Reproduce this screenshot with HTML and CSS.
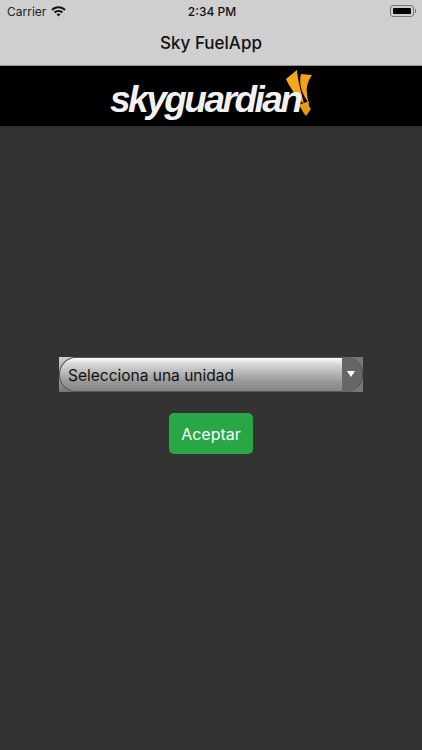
FILE: index.html
```html
<!DOCTYPE html>
<html lang="es">
<head>
    <meta charset="UTF-8">
    <meta name="viewport" content="width=device-width, initial-scale=1.0">
    <title>Sky FuelApp</title>
    <link rel="stylesheet" href="styles.css">
</head>
<body>

<div class="app">
    <div class="topbar">
        <div class="status-bar">
            <div class="status-left">
                <span>Carrier</span>
                <svg class="wifi" width="15" height="11" viewBox="0 0 15 11">
                    <path d="M7.5 0.3C4.7 0.3 2.2 1.4 0.3 3.2L1.7 4.7C3.2 3.2 5.2 2.3 7.5 2.3S11.8 3.2 13.3 4.7L14.7 3.2C12.8 1.4 10.3 0.3 7.5 0.3Z" fill="#111"/>
                    <path d="M7.5 3.9C5.7 3.9 4.1 4.6 2.9 5.8L4.3 7.2C5.1 6.4 6.2 5.9 7.5 5.9S9.9 6.4 10.7 7.2L12.1 5.8C10.9 4.6 9.3 3.9 7.5 3.9Z" fill="#111"/>
                    <path d="M7.5 7.4C6.7 7.4 6 7.7 5.5 8.2L7.5 10.6L9.5 8.2C9 7.7 8.3 7.4 7.5 7.4Z" fill="#111"/>
                </svg>
            </div>
            <div class="status-time">2:34 PM</div>
            <div class="status-right">
                <div class="battery"><div class="battery-level"></div></div>
                <div class="battery-tip"></div>
            </div>
        </div>
        <div class="nav-title">Sky FuelApp</div>
    </div>

    <div class="brand">
        <div class="logo">
            <svg class="logo-wings" width="30" height="50" viewBox="0 0 30 50">
                <path d="M12 1L1 10C4 17 11 27 19 35C17 25 13 14 12 1Z" fill="#f5a81c"/>
                <path d="M16 5L27 6C23 12 21 18 22 24C22 28 23 31 24 34C18 27 13 15 16 5Z" fill="#f0a31a"/>
                <path d="M14 36L24 32C23 36 25 39 26 40L21 47C18 44 17 40 14 36Z" fill="#e89a14"/>
            </svg>
            <span class="logo-text">skyguardian</span>
        </div>
    </div>

    <div class="content">
        <div class="unit-select">
            <div class="unit-pill">
                <span class="unit-label">Selecciona una unidad</span>
            </div>
            <div class="unit-arrow">
                <div class="arrow-cap"><span class="arrow-down"></span></div>
            </div>
        </div>
        <button class="btn-accept" type="button">Aceptar</button>
    </div>
</div>

</body>
</html>
```

FILE: styles.css
```css
body {
    margin: 0;
    padding: 0;
    font-family: 'Inter', 'Roboto', sans-serif;
    background-color: #333;
}
.app {
    width: 422px;
    height: 750px;
    display: flex;
    flex-direction: column;
    overflow: hidden;
}
.topbar {
    height: 65px;
    background-color: #cfcfcf;
    border-bottom: 1px solid #8f8f8f;
}
.status-bar {
    height: 22px;
    padding: 0 6px 0 7px;
    display: flex;
    align-items: center;
    justify-content: space-between;
    font-size: 12px;
    color: #222;
}
.status-left {
    width: 120px;
    display: flex;
    align-items: center;
    gap: 6px;
}
.wifi {
    margin-left: -1px;
}
.status-time {
    font-weight: 500;
    font-size: 12px;
    color: #111;
    padding-left: 1px;
}
.status-right {
    width: 120px;
    display: flex;
    align-items: center;
    justify-content: flex-end;
}
.battery {
    width: 24px;
    height: 12px;
    box-sizing: border-box;
    padding: 2px;
    border: 1px solid #777;
    border-radius: 3px;
}
.battery-level {
    height: 100%;
    background-color: #000;
    border-radius: 1px;
}
.battery-tip {
    width: 1px;
    height: 4px;
    margin-left: 1px;
    background-color: #777;
}
.nav-title {
    height: 43px;
    line-height: 43px;
    text-align: center;
    font-size: 17px;
    font-weight: 500;
    color: #111;
}
.brand {
    height: 60px;
    background-color: #000;
    border-bottom: 1px solid #2a2a2a;
    display: flex;
    justify-content: center;
}
.logo {
    position: relative;
    width: 204px;
    height: 60px;
    margin-left: 2px;
}
.logo-text {
    position: absolute;
    left: 0;
    bottom: 3px;
    font-family: 'Liberation Sans', sans-serif;
    font-size: 37px;
    font-weight: 700;
    font-style: italic;
    letter-spacing: -2.5px;
    line-height: 46px;
    color: #f1f1f1;
}
.logo-wings {
    position: absolute;
    left: 175px;
    top: 3px;
}
.content {
    flex: 1;
    padding: 230px 59px 0;
    display: flex;
    flex-direction: column;
    align-items: center;
    gap: 21px;
}
.unit-select {
    width: 304px;
    height: 35px;
    display: flex;
    background: linear-gradient(#d0d0d0, #777);
}
.unit-pill {
    flex: 1;
    box-sizing: border-box;
    padding: 1px 0 0 8px;
    display: flex;
    align-items: center;
    border: 1px solid #555;
    border-right: none;
    border-radius: 17px 0 0 17px;
    background: linear-gradient(#fdfdfd, #d8d8d8 18%, #9a9a9a 70%, #858585);
}
.unit-label {
    font-size: 15.5px;
    color: #111;
}
.unit-arrow {
    width: 21px;
    background-color: #777;
}
.arrow-cap {
    height: 100%;
    box-sizing: border-box;
    padding: 0 3px 2px 0;
    display: flex;
    align-items: center;
    justify-content: center;
    background-color: #666;
    border-right: 1px solid #4c4c4c;
    border-radius: 0 17px 17px 0;
}
.arrow-down {
    width: 0;
    height: 0;
    border-left: 4px solid transparent;
    border-right: 4px solid transparent;
    border-top: 6px solid #fff;
}
.btn-accept {
    width: 84px;
    height: 41px;
    padding: 0;
    border: none;
    border-radius: 5px;
    background-color: #28a745;
    color: #fff;
    font-family: 'Inter', 'Roboto', sans-serif;
    font-size: 16px;
}
```
